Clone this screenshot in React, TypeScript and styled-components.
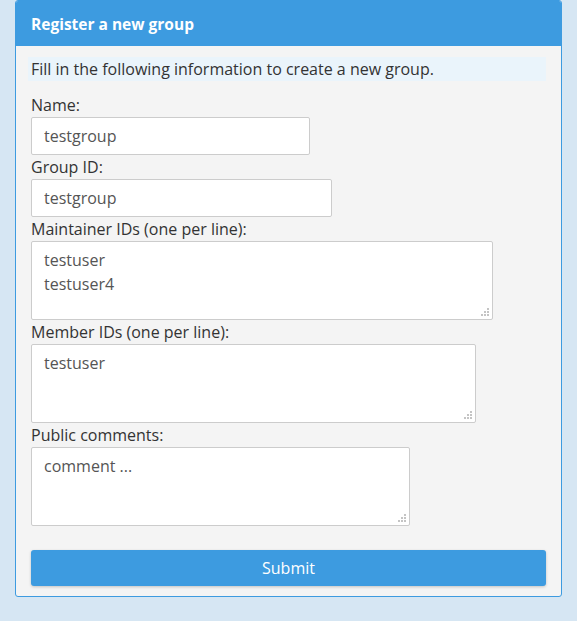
import React from "react";
import styled, { createGlobalStyle } from "styled-components";

const Global = createGlobalStyle`
  html, body {
    margin: 0;
    padding: 0;
    background: #d6e6f3;
    font-family: "Open Sans", "Noto Sans", sans-serif;
  }
  * { box-sizing: border-box; }
`;

const Page = styled.div`
  padding: 0 15px 24px 15px;
  width: 577px;
`;

const Panel = styled.div`
  width: 547px;
  border: 1px solid #3d9be0;
  border-radius: 3px;
  background: #f4f4f4;
  overflow: hidden;
`;

const Header = styled.div`
  background: #3d9be0;
  color: #fff;
  font-weight: 700;
  font-size: 15.5px;
  height: 45px;
  display: flex;
  align-items: center;
  padding: 0 15px;
`;

const Body = styled.form`
  padding: 11px 15px 10px 12px;
  display: flex;
  flex-direction: column;
`;

const Info = styled.div`
  background: #eaf4fb;
  color: #333;
  font-size: 16px;
  line-height: 24px;
  padding: 0 3px;
  margin-bottom: 12px;
`;

const Field = styled.div`
  display: flex;
  flex-direction: column;
  align-items: flex-start;
  padding-left: 3px;
`;

const Label = styled.label`
  color: #333;
  font-size: 16px;
  line-height: 24px;
`;

const TextInput = styled.input<{ $w: number }>`
  width: ${(p) => p.$w}px;
  height: 38px;
  border: 1px solid #cccccc;
  border-radius: 2px;
  background: #fff;
  padding: 0 12px;
  font-family: inherit;
  font-size: 16px;
  color: #555;
  outline: none;
`;

const AreaWrap = styled.div`
  position: relative;
  display: block;
`;

const TextArea = styled.textarea<{ $w: number }>`
  width: ${(p) => p.$w}px;
  height: 79px;
  border: 1px solid #cccccc;
  border-radius: 2px;
  background: #fff;
  padding: 6px 12px;
  font-family: inherit;
  font-size: 16px;
  line-height: 24px;
  color: #555;
  outline: none;
  resize: none;
  display: block;
`;

const Grip = styled.span`
  position: absolute;
  right: 4px;
  bottom: 4px;
  width: 2px;
  height: 2px;
  background: #c4c4c4;
  pointer-events: none;
  box-shadow:
    -3px 0 0 #c4c4c4,
    -6px 0 0 #c4c4c4,
    0 -3px 0 #c4c4c4,
    -3px -3px 0 #c4c4c4,
    0 -6px 0 #c4c4c4;
`;

const Submit = styled.button`
  margin: 24px 0 0 3px;
  height: 36px;
  width: 515px;
  border: none;
  border-radius: 3px;
  background: #3d9be0;
  color: #fff;
  font-family: inherit;
  font-size: 16px;
  box-shadow: 0 1px 3px rgba(0, 0, 0, 0.2);
  cursor: pointer;
`;

function Area({ w, value }: { w: number; value: string }) {
  return (
    <AreaWrap>
      <TextArea $w={w} defaultValue={value} />
      <Grip />
    </AreaWrap>
  );
}

export default function App() {
  return (
    <>
      <Global />
      <Page>
        <Panel>
          <Header>Register a new group</Header>
          <Body onSubmit={(e) => e.preventDefault()}>
            <Info>Fill in the following information to create a new group.</Info>
            <Field>
              <Label>Name:</Label>
              <TextInput $w={279} defaultValue="testgroup" />
            </Field>
            <Field>
              <Label>Group ID:</Label>
              <TextInput $w={301} defaultValue="testgroup" />
            </Field>
            <Field>
              <Label>Maintainer IDs (one per line):</Label>
              <Area w={462} value={"testuser\ntestuser4"} />
            </Field>
            <Field>
              <Label>Member IDs (one per line):</Label>
              <Area w={445} value="testuser" />
            </Field>
            <Field>
              <Label>Public comments:</Label>
              <Area w={379} value="comment ..." />
            </Field>
            <Submit type="submit">Submit</Submit>
          </Body>
        </Panel>
      </Page>
    </>
  );
}
